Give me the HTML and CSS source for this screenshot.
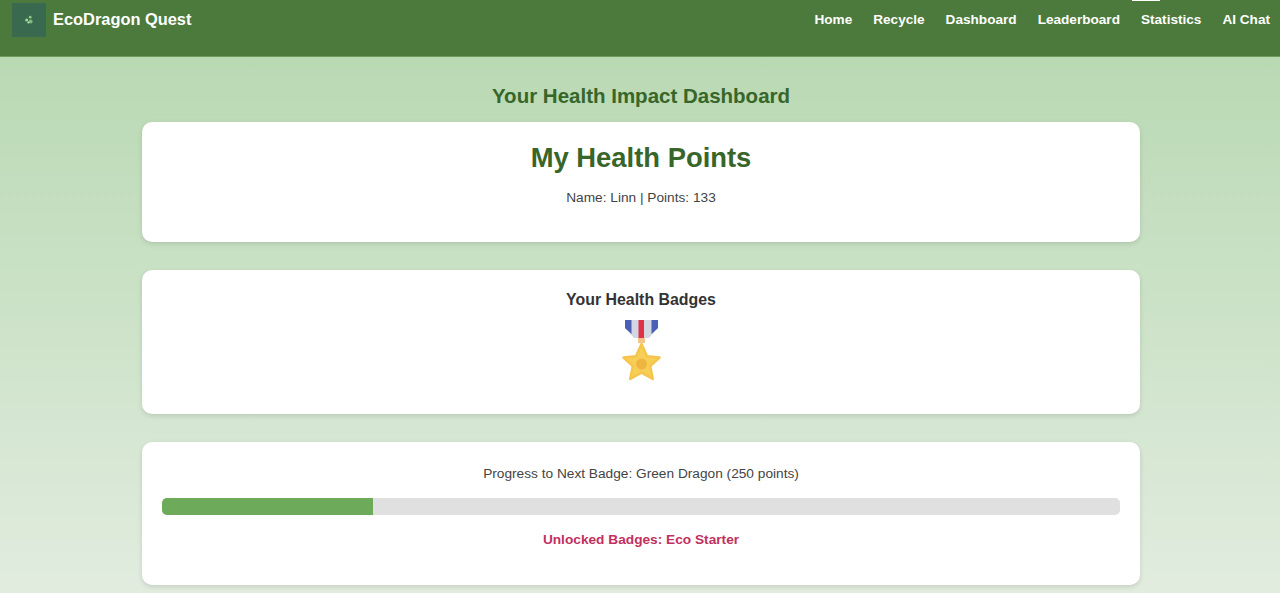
FILE: index.html
```html
<!DOCTYPE html>
<html lang="en">
<head>
    <meta charset="UTF-8">
    <meta name="viewport" content="width=device-width, initial-scale=1.0">
    <title>Your Health Impact Dashboard</title>
    <link rel="stylesheet" href="styles.css">
</head>
<body>

    <nav class="navbar">
        <div class="brand">
            <span class="brand-logo">
                <svg width="10" height="10" viewBox="0 0 10 10">
                    <circle cx="6.2" cy="2.2" r="1.4" fill="#8fc98a"/>
                    <circle cx="2.6" cy="5" r="1.5" fill="#a5d6a0"/>
                    <circle cx="6.6" cy="6.4" r="2" fill="#7cbc78"/>
                    <circle cx="4.4" cy="7.6" r="1" fill="#c5e4c0"/>
                </svg>
            </span>
            <span class="brand-name">EcoDragon Quest</span>
        </div>
        <ul class="nav-links">
            <li><a href="#">Home</a></li>
            <li><a href="#">Recycle</a></li>
            <li><a href="#">Dashboard</a></li>
            <li><a href="#">Leaderboard</a></li>
            <li><a href="#" class="active">Statistics</a></li>
            <li><a href="#">AI Chat</a></li>
        </ul>
    </nav>

    <main class="content">
        <h2 class="page-title">Your Health Impact Dashboard</h2>

        <section class="card points-card">
            <h1>My Health Points</h1>
            <p>Name: Linn | Points: 133</p>
        </section>

        <section class="card badges-card">
            <h3>Your Health Badges</h3>
            <svg class="medal" width="42" height="62" viewBox="0 0 42 62">
                <!-- ribbon -->
                <path d="M5 0H38V8L29 18H14L5 8Z" fill="#d3d7e2"/>
                <path d="M5 0H11.5V14L5 8Z" fill="#4a5fb5"/>
                <path d="M31.5 0H38V8L31.5 14Z" fill="#4a5fb5"/>
                <rect x="18.5" y="0" width="5.5" height="18" fill="#e0314a"/>
                <rect x="18" y="18" width="7" height="5" fill="#f3c58a"/>
                <!-- star -->
                <path d="M21.5 24L27 36.2L39.5 37.6L30.2 46.2L32.8 59L21.5 52.6L10.2 59L12.8 46.2L3.5 37.6L16 36.2Z" fill="#f8cf56" stroke="#f5c54c" stroke-width="2.5" stroke-linejoin="round"/>
                <circle cx="21.5" cy="44" r="5.5" fill="#efb541"/>
            </svg>
        </section>

        <section class="card progress-card">
            <p>Progress to Next Badge: Green Dragon (250 points)</p>
            <div class="progress-track">
                <div class="progress-fill" style="width: 22%"></div>
            </div>
            <p class="unlocked">Unlocked Badges: Eco Starter</p>
        </section>
    </main>

</body>
</html>
```

FILE: styles.css
```css
* {
    box-sizing: border-box;
}

html, body {
    height: 100%;
    margin: 0;
}

body {
    display: flex;
    flex-direction: column;
    font-family: "Liberation Sans", Arial, sans-serif;
    color: #444;
    overflow: hidden;
}

/* Navbar */
.navbar {
    display: flex;
    justify-content: space-between;
    align-items: flex-start;
    height: 57px;
    flex-shrink: 0;
    padding: 3px 10px 0 12px;
    background-color: #4b7a3c;
    border-bottom: 1px solid #6e9a60;
}

.brand {
    display: flex;
    align-items: center;
    gap: 7px;
}

.brand-logo {
    display: flex;
    align-items: center;
    justify-content: center;
    width: 34px;
    height: 34px;
    background-color: #39694f;
}

.brand-name {
    padding-bottom: 2px;
    font-size: 16.4px;
    font-weight: bold;
    color: #fff;
}

.nav-links {
    display: flex;
    gap: 21px;
    margin: -3px 0 0;
    padding: 0;
    list-style: none;
}

.nav-links a {
    display: block;
    padding-top: 12px;
    font-size: 13.6px;
    font-weight: bold;
    color: #fff;
    text-decoration: none;
}

.nav-links a.active {
    position: relative;
}

.nav-links a.active::before {
    content: "";
    position: absolute;
    top: 0;
    left: -9px;
    width: 28px;
    height: 1px;
    background-color: #fff;
}

/* Main content */
.content {
    flex: 1;
    display: flex;
    flex-direction: column;
    align-items: center;
    padding: 27px 0 0 2px;
    background: linear-gradient(to bottom, #b9d9b3, #e3ede1);
}

.page-title {
    margin: 0 0 14px;
    font-size: 20.5px;
    line-height: 24px;
    color: #38662a;
}

.card {
    width: 998px;
    margin-bottom: 28px;
    padding: 20px;
    text-align: center;
    background-color: #fff;
    border-radius: 10px;
    box-shadow: 0px 2px 5px rgba(0, 0, 0, 0.12);
}

.card p {
    margin: 0;
    font-size: 13.7px;
    line-height: 16px;
}

.points-card {
    height: 120px;
}

.points-card h1 {
    margin: 0 0 16px;
    font-size: 27.4px;
    line-height: 32px;
    color: #38662a;
}

.badges-card {
    height: 144px;
    padding-top: 21px;
}

.badges-card h3 {
    margin: 0 0 11px;
    font-size: 15.9px;
    line-height: 18px;
    color: #333;
}

.medal {
    display: block;
    margin: 0 auto;
}

.progress-card {
    height: 143px;
    padding-top: 24px;
}

.progress-track {
    height: 17px;
    margin-top: 16px;
    background-color: #e0e0e0;
    border-radius: 5px;
    overflow: hidden;
}

.progress-fill {
    height: 100%;
    background-color: #6dab5a;
}

.card .unlocked {
    margin-top: 17px;
    font-weight: bold;
    color: #c2305f;
}
```
